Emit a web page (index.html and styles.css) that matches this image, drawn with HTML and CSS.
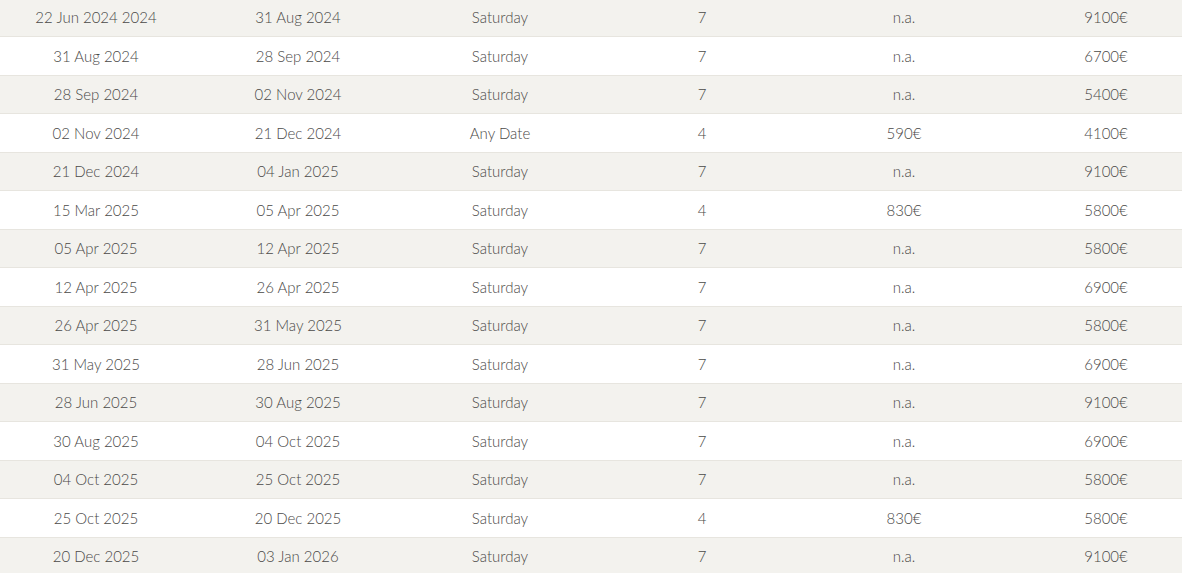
FILE: index.html
```html
<!DOCTYPE html>
<html>
<head>
<meta charset="utf-8">
<link rel="stylesheet" href="styles.css">
</head>
<body>
<div class="wrap">
<table class="prices">
<tbody>
<tr><td>22 Jun 2024 2024</td><td>31 Aug 2024</td><td>Saturday</td><td>7</td><td>n.a.</td><td>9100€</td></tr>
<tr><td>31 Aug 2024</td><td>28 Sep 2024</td><td>Saturday</td><td>7</td><td>n.a.</td><td>6700€</td></tr>
<tr><td>28 Sep 2024</td><td>02 Nov 2024</td><td>Saturday</td><td>7</td><td>n.a.</td><td>5400€</td></tr>
<tr><td>02 Nov 2024</td><td>21 Dec 2024</td><td>Any Date</td><td>4</td><td>590€</td><td>4100€</td></tr>
<tr><td>21 Dec 2024</td><td>04 Jan 2025</td><td>Saturday</td><td>7</td><td>n.a.</td><td>9100€</td></tr>
<tr><td>15 Mar 2025</td><td>05 Apr 2025</td><td>Saturday</td><td>4</td><td>830€</td><td>5800€</td></tr>
<tr><td>05 Apr 2025</td><td>12 Apr 2025</td><td>Saturday</td><td>7</td><td>n.a.</td><td>5800€</td></tr>
<tr><td>12 Apr 2025</td><td>26 Apr 2025</td><td>Saturday</td><td>7</td><td>n.a.</td><td>6900€</td></tr>
<tr><td>26 Apr 2025</td><td>31 May 2025</td><td>Saturday</td><td>7</td><td>n.a.</td><td>5800€</td></tr>
<tr><td>31 May 2025</td><td>28 Jun 2025</td><td>Saturday</td><td>7</td><td>n.a.</td><td>6900€</td></tr>
<tr><td>28 Jun 2025</td><td>30 Aug 2025</td><td>Saturday</td><td>7</td><td>n.a.</td><td>9100€</td></tr>
<tr><td>30 Aug 2025</td><td>04 Oct 2025</td><td>Saturday</td><td>7</td><td>n.a.</td><td>6900€</td></tr>
<tr><td>04 Oct 2025</td><td>25 Oct 2025</td><td>Saturday</td><td>7</td><td>n.a.</td><td>5800€</td></tr>
<tr><td>25 Oct 2025</td><td>20 Dec 2025</td><td>Saturday</td><td>4</td><td>830€</td><td>5800€</td></tr>
<tr><td>20 Dec 2025</td><td>03 Jan 2026</td><td>Saturday</td><td>7</td><td>n.a.</td><td>9100€</td></tr>
</tbody>
</table>
</div>
</body>
</html>
```
FILE: styles.css
```css
html, body {
  margin: 0;
  padding: 0;
  background: #ffffff;
  overflow: hidden;
}
.wrap {
  width: 1182px;
  height: 573px;
  overflow: hidden;
}
.prices {
  border-collapse: collapse;
  table-layout: fixed;
  width: 1212px;
  margin: -1.5px 0 0 -5px;
  font-family: "Lato", "Liberation Sans", sans-serif;
  font-size: 15px;
  font-weight: 300;
  color: #4a4947;
}
.prices td {
  width: 202px;
  height: 37.5px;
  padding: 0;
  text-align: center;
  vertical-align: middle;
  border-bottom: 1px solid #e7e5df;
}
.prices tr:nth-child(odd) td {
  background: #f3f2ee;
}
```
